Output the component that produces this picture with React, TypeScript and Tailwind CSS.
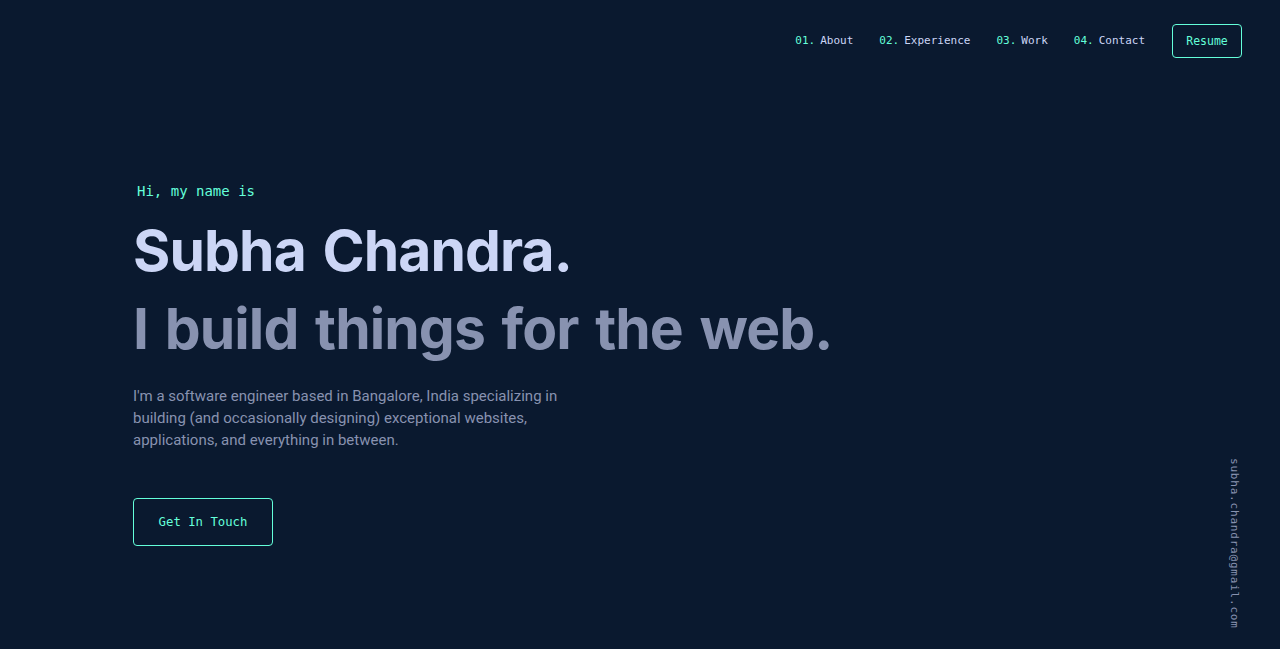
import React from 'react';

const mono = "font-['DejaVu_Sans_Mono',monospace]";

const navItems = [
  { num: '01.', label: 'About' },
  { num: '02.', label: 'Experience' },
  { num: '03.', label: 'Work' },
  { num: '04.', label: 'Contact' },
];

const Header: React.FC = () => (
  <header className="flex h-[81px] items-center justify-end pr-[38px]">
    <nav className={`flex items-center ${mono} text-[11px] text-[#ccd6f6]`}>
      <ol className="mt-[2px] flex items-center gap-[26px]">
        {navItems.map((item) => (
          <li key={item.num}>
            <a href="#" className="flex">
              <span className="text-[#64ffda]">{item.num}</span>
              <span className="ml-[5px]">{item.label}</span>
            </a>
          </li>
        ))}
      </ol>
      <a
        href="#"
        className="ml-[27px] flex h-[34px] w-[70px] items-center justify-center rounded-[4px] border border-[#64ffda] pt-[2px] text-[11.5px] text-[#64ffda]"
      >
        Resume
      </a>
    </nav>
  </header>
);

const App: React.FC = () => {
  return (
    <div className="relative min-h-[649px] overflow-hidden bg-[#0a192f] font-['Inter',sans-serif]">
      <Header />
      <main className="pl-[133px]">
        <section className="flex flex-col pt-[100px]">
          <h1 className={`${mono} ml-[4px] text-[14px] leading-[20px] text-[#64ffda]`}>Hi, my name is</h1>
          <h2 className="mt-[11px] text-[57px] leading-[78px] font-bold tracking-[-0.9px] [word-spacing:4px] text-[#ccd6f6]">
            Subha Chandra.
          </h2>
          <h3 className="text-[57px] leading-[78px] font-bold tracking-[-0.9px] [word-spacing:4px] text-[#8892b0]">
            I build things for the web.
          </h3>
          <p className="mt-[17px] max-w-[440px] font-['Roboto',sans-serif] text-[15px] leading-[22px] text-[#8892b0]">
            I'm a software engineer based in Bangalore, India specializing in building (and occasionally designing)
            exceptional websites, applications, and everything in between.
          </p>
          <div className="mt-[47px]">
            <a
              href="#"
              className={`inline-flex h-[48px] w-[140px] items-center justify-center rounded-[4px] border border-[#64ffda] ${mono} text-[12.3px] text-[#64ffda]`}
            >
              Get In Touch
            </a>
          </div>
        </section>
      </main>
      <div className="absolute right-[38px] top-[458px]">
        <a
          href="#"
          className={`${mono} text-[11px] tracking-[0.8px] text-[#8892b0] [writing-mode:vertical-rl]`}
        >
          subha.chandra@gmail.com
        </a>
      </div>
    </div>
  );
};

export default App;
